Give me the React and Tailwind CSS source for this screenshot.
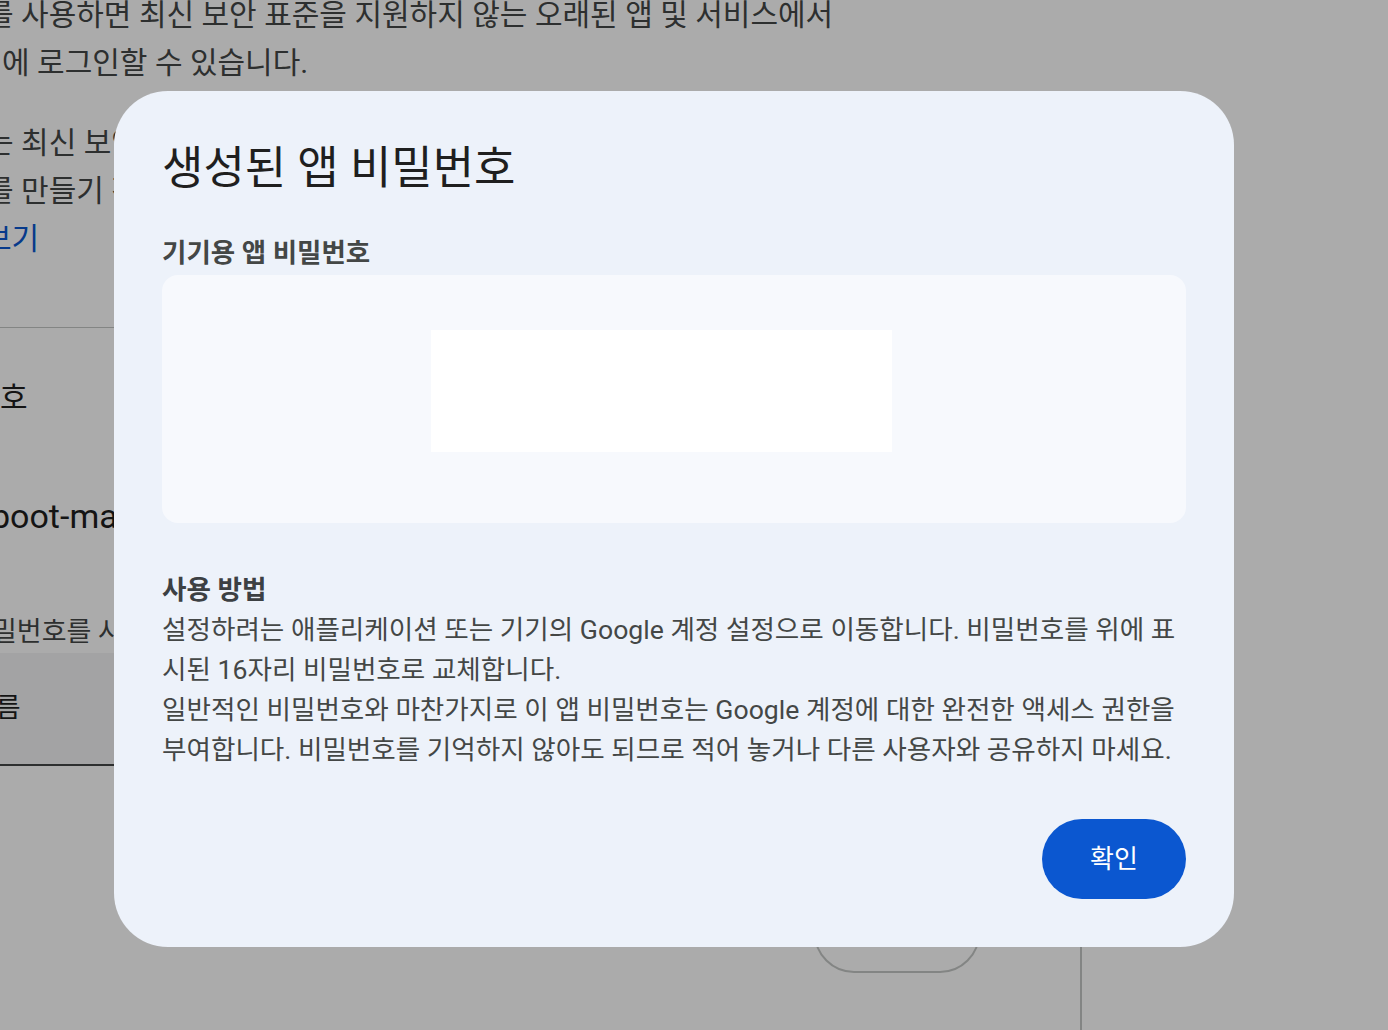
import React from "react";

const font = "font-['Roboto','Noto_Sans_CJK_KR',sans-serif]";

// page behind the dialog (only its edges show)
const BackPage = () => {
  return (
    <div className={`relative min-h-[1030px] w-full overflow-hidden bg-white text-[#444746] ${font}`}>
      <div className="flex flex-col text-[30px] leading-[48px]">
        <p className="-mt-[9px] ml-[-14px] whitespace-nowrap">를 사용하면 최신 보안 표준을 지원하지 않는 오래된 앱 및 서비스에서</p>
        <p className="ml-[2px] whitespace-nowrap">에 로그인할 수 있습니다.</p>
        <p className="mt-[32px] ml-[-14px] whitespace-nowrap">는 최신 보안 표준을 사용합니다</p>
        <p className="ml-[-14px] whitespace-nowrap">를 만들기 전에 확인하세요</p>
        <p className="ml-[-16px] whitespace-nowrap text-[#0b57d0]">보기</p>
      </div>
      <div className="mt-[64px] h-px w-[1080px] bg-[#c4c7c5]" />
      <p className="mt-[46px] text-[30px] leading-[48px] text-[#1f1f1f]">호</p>
      <p className="mt-[70px] ml-[-9px] whitespace-nowrap text-[34px] leading-[48px] text-[#1f1f1f]">boot-mail</p>
      <p className="mt-[72px] ml-[-8px] whitespace-nowrap text-[27px] leading-[40px]">밀번호를 사용합니다</p>
      <div className="mt-[1px] flex h-[113px] w-[1080px] items-center border-b-2 border-[#444746] bg-[#f3f4f5]">
        <span className="ml-[-29px] text-[27px] text-[#1f1f1f]">이름</span>
      </div>
      <div className="flex w-[1080px] justify-end">
        <div className="mr-[100px] mt-[20px] h-[187px] w-[166px] rounded-[40px] border-2 border-[#c4c7c5]" />
      </div>
      <div className="absolute bottom-0 left-[1080px] top-[880px] w-[2px] bg-[#c4c7c5]" />
    </div>
  );
};

const App = () => {
  return (
    <div className="relative min-h-[1030px] w-full">
      <BackPage />
      {/* scrim */}
      <div className="fixed inset-0 bg-black/[0.33]" />
      <div className="fixed inset-0 flex items-start pl-[114px] pt-[91px]">
        <div className={`flex h-[856px] w-[1120px] flex-col rounded-[54px] bg-[#edf2fa] px-[48px] pt-[49px] pb-[48px] ${font}`}>
          <h1 className="text-[45px] leading-[58px] text-[#1f1f1f]">생성된 앱 비밀번호</h1>
          <h2 className="mt-[37px] text-[26.5px] font-semibold leading-[36px] text-[#444746]">기기용 앱 비밀번호</h2>
          <div className="mt-[4px] flex h-[248px] items-center justify-center rounded-[16px] bg-[#f7f9fd] pb-[16px] pr-[26px]">
            <div className="h-[122px] w-[461px] bg-white" />
          </div>
          <h3 className="mt-[47px] text-[26.6px] font-bold leading-[40px] text-[#3c4043]">사용 방법</h3>
          <p className="text-[26.6px] leading-[40px] text-[#444746]">
            설정하려는 애플리케이션 또는 기기의 Google 계정 설정으로 이동합니다. 비밀번호를 위에 표시된 16자리 비밀번호로 교체합니다.
            <br />
            일반적인 비밀번호와 마찬가지로 이 앱 비밀번호는 Google 계정에 대한 완전한 액세스 권한을 부여합니다. 비밀번호를 기억하지 않아도 되므로 적어 놓거나 다른 사용자와 공유하지 마세요.
          </p>
          <div className="mt-auto flex justify-end">
            <button className="h-[80px] w-[144px] rounded-full bg-[#0b57d0] text-[26px] text-white">확인</button>
          </div>
        </div>
      </div>
    </div>
  );
};

export default App;
